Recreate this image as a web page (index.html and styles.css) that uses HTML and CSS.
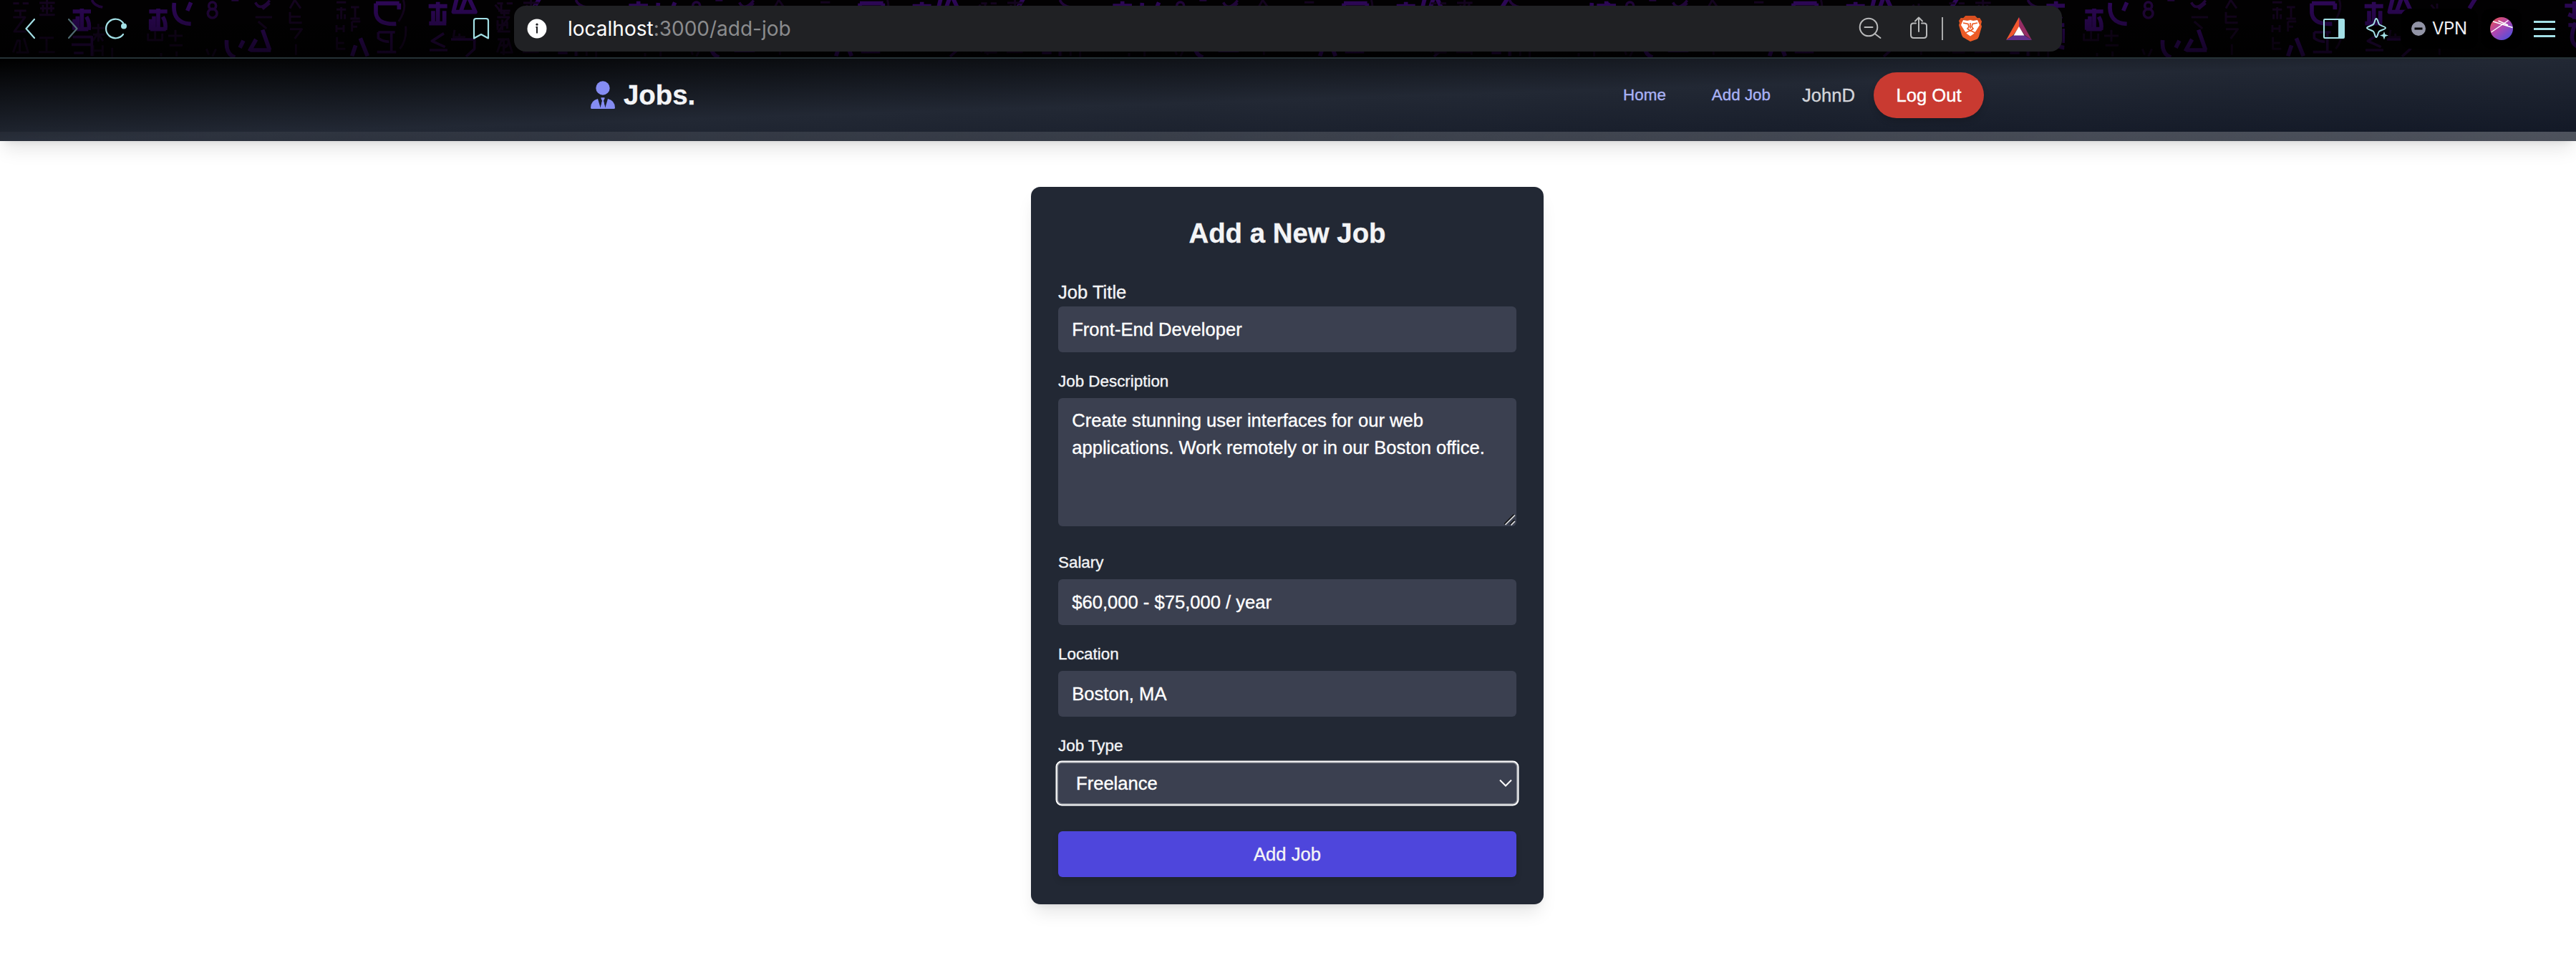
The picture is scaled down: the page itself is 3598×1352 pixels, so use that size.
FILE: index.html
```html
<!DOCTYPE html>
<html lang="en">
<head>
<meta charset="utf-8">
<title>Add a New Job</title>
<link rel="stylesheet" href="styles.css">
</head>
<body>
<div class="toolbar">
  <svg class="rain" width="3598" height="80" viewBox="0 0 3598 80" aria-hidden="true">
    <defs>
      <linearGradient id="rainFade" x1="0" y1="0" x2="0" y2="1">
        <stop offset="0" stop-color="#000" stop-opacity="0"/>
        <stop offset="1" stop-color="#000" stop-opacity=".6"/>
      </linearGradient>
      <g id="rainTile" transform="scale(.33333)" fill="none" stroke-linejoin="round">
        <g class="dim">
          <path d="M55 14h25M95 14h25M60 45h50M55 72h50l-45 60h50M85 45v22"/>
          <path d="M165 12h65M197 0v62M168 35h60M165 62h65M180 20v30M215 20v30"/>
          <path d="M55 220l18-50 10 0v50M100 160l18 60h-50M165 158h60M195 158v60M162 218h68"/>
          <path d="M385 118h55M412 100v75M390 145h48M390 170l20-30 22 32M390 190v45M430 190v45M390 212h40"/>
          <path d="M620 140v28h60v-28M650 132v34M705 150h60M735 125v50M710 190h55M675 222v15M740 215v22"/>
          <path d="M470 200v40M865 205l10 25M905 205l-15 32"/>
          <path d="M1070 72h70M1082 90l35 30M1215 35l20-35 25 35M1215 50v45h50M1215 70h45M1215 122h50l-30 40M1240 185v45"/>
          <path d="M1410 10h40M1410 40h40M1430 30v50M1415 60v20M1445 60v20M1410 105v30M1440 105v30M1410 120h30M1412 155v50h35M1412 180h30"/>
          <path d="M1470 30h35M1488 30v48M1468 78h40M1475 90h35M1475 90v42M1475 112h22M1690 0q15 40-20 90M1700 110q5 60-25 95"/>
          <path d="M2075 20l20 25M2100 15v40h35M2085 85v40M2105 82v45M2125 90v30M2080 105h50M2085 165h45q5 30-20 35v30M2090 190h35"/>
          <path d="M1905 125l-5 30h50M1925 140v30"/>
        </g>
        <circle cx="890" cy="24" r="15" class="mid"/>
        <circle cx="890" cy="56" r="19" class="mid"/>
        <g class="mid">
          <path d="M385 0q10 25 45 30M970 0l30 0M1070 10q20 40 60-8M1100 38l30-25"/>
          <path d="M305 155h80v80M300 187h80M310 222h40"/>
          <path d="M1860 140l-50 32 55 25M1800 210h75M1890 165h98v40l-35 32"/>
          <path d="M1585 135h70M1640 130v85M1585 135v25q20 15 45 15M1580 218h80"/>
        </g>
        <g class="lit">
          <path d="M305 48h76M343 36v86M325 68v55M320 122h50M362 70q15 25 10 55M312 80v45"/>
          <path d="M625 48h76M663 36v86M645 68v55M630 122h65M682 70q15 25 10 55M632 80v45"/>
          <path d="M730 12q-10 85 70 88M800 10l-15 35"/>
          <path d="M950 168q-5 60 35 72M1020 170l-15 30"/>
          <path d="M1045 215l28-50M1100 125l30 85M1050 210h85"/>
          <path d="M1575 14h98M1672 14v26M1575 14v40q5 50 85 46"/>
          <path d="M1796 26h78M1835 8v88M1815 46v52M1798 98h72M1862 46v50"/>
          <path d="M1920-30l-20 80h92l-35-75M1930 50l22-60"/>
          <path d="M1475 235l15-45M1510 160l30 75"/>
        </g>
        <g class="lit">
          <path d="M2260-5l-25 40M2635 24h80M2675 5v75M2650 60l50 20M2650 105h60M2680 95q-40 100 30 105M2710 120v60"/>
        </g>
      </g>
    </defs>
    <use href="#rainTile"/>
    <use href="#rainTile" x="676"/>
    <use href="#rainTile" x="1352"/>
    <use href="#rainTile" x="1980"/>
    <rect x="2884" width="714" height="80" fill="#020102"/>
    <use href="#rainTile" x="2704"/>
    <rect width="3598" height="80" fill="url(#rainFade)"/>
  </svg>

  <div class="controls">
    <svg width="14" height="80" viewBox="35 0 14 80" class="cyan"><path d="M48 27L36.500 40L48 53"/></svg>
    <svg width="14" height="80" viewBox="95 0 14 80" class="cyan faded"><path d="M96 27L107.500 40L96 53"/></svg>
    <svg width="32" height="80" viewBox="146 0 32 80" class="cyan"><path d="M172 48a13.300 13.300 0 1 1 0-16"/><circle cx="173" cy="36.500" r="4" class="cyan-fill"/></svg>
  </div>
  <svg width="24" height="80" viewBox="660 0 24 80" class="cyan bookmark"><path d="M662 29q0-3 3-3h14q3 0 3 3v24.500l-10-5.500l-10 5.500z"/></svg>

  <div class="address">
    <svg width="28" height="28" viewBox="0 0 28 28"><circle cx="14" cy="14" r="13.500" fill="#fff"/><circle cx="14" cy="8.200" r="1.600" fill="#202124"/><path d="M12.500 12H14v8.500" fill="none" stroke="#202124" stroke-width="2"/></svg>
    <span class="url"><span class="host">localhost</span><span class="path">:3000/add-job</span></span>
    <svg width="32" height="64" viewBox="2596 8 32 64" class="grey"><circle cx="2610" cy="38" r="12.300"/><path d="M2604.500 38h11M2618.500 47L2626.500 53"/></svg>
    <svg width="24" height="64" viewBox="2668 8 24 64" class="grey share"><path d="M2676 32.500h-3.500q-3.500 0-3.500 3.500v13q0 4 4 4h14q4 0 4-4v-13q0-3.500-3.500-3.500h-3.500M2680 44V25M2675 29.500l5-5l5 5"/></svg>
    <span class="divider"></span>
    <svg width="32" height="36" viewBox="0 0 32 36"><path d="M9.500 0h13l3.500 3.500l3-.5l3 5l-1 4l1 3l-4 14q-1 3-3.500 4L16 36l-8.500-5q-2.500-1-3.500-4L0 13l1-3L0 7l3-4l3 .5z" fill="#ed5b25"/><path d="M9.500 0h13l3.500 3.500l3-.5l3 5h-6L16 5L6 8H0l3-5l3 .5z" fill="#d94f20"/><path d="M6 6l6 1l4-1l4 1l6-1l3 7l-5 8l-3 4l-5 3.500l-5-3.500l-3-4l-5-8z" fill="#fff"/><path d="M6 10l7 1.500l1 4l-2 2.500l4 3l4-3l-2-2.500l1-4l7-1.500M16 10v8M9 24l7-3.500l7 3.500" fill="none" stroke="#ed5b25" stroke-width="1.700"/></svg>
    <svg class="bat" width="36" height="32" viewBox="0 0 36 32"><path d="M18 0v14L10 25L0 32z" fill="#f1562f"/><path d="M18 0l18 32l-10-7l-8-11z" fill="#962c64"/><path d="M0 32l11-7h14l11 7z" fill="#612f8c"/><path d="M18 13l7.500 12.500h-15z" fill="#fff"/></svg>
  </div>

  <div class="extras">
    <svg width="30" height="28" viewBox="0 0 30 28"><rect x="1" y="1" width="28" height="26" rx="1" fill="none" stroke="#a3e0e6" stroke-width="2"/><path d="M21 1h8v26h-8z" fill="#a3e0e6"/></svg>
    <svg class="spark" width="32" height="80" viewBox="3304 0 32 80"><path d="M3319 26c2 0 2.500 6 4 8s9 3 9 5-7 3-9 5-2 8-4 8-2-6-4-8-9-3-9-5 7-3 9-5 2-8 4-8z" fill="none" stroke="#a3e0e6" stroke-width="2"/><path d="M3330 44l1.500 4l4.500 1.500l-4.500 1.500l-1.500 4.500l-1.500-4.500l-4.500-1.500l4.500-1.500z" fill="#a3e0e6"/></svg>
    <span class="vpn"><svg width="20" height="20" viewBox="0 0 20 20"><circle cx="10" cy="10" r="10" fill="#9294a6"/><path d="M4.500 10h11" stroke="#000" stroke-width="3"/></svg>VPN</span>
    <span class="profile"><svg width="32" height="32" viewBox="0 0 32 32"><defs><linearGradient id="orb" x1=".1" y1="0" x2=".9" y2="1"><stop offset="0" stop-color="#e8544f"/><stop offset=".45" stop-color="#b045b0"/><stop offset="1" stop-color="#4450e0"/></linearGradient></defs><circle cx="16" cy="16" r="16" fill="url(#orb)"/><path d="M4 6l27.500 8.500M1.500 21L25.500 4.500M11.500 5L25 11" stroke="#fff" stroke-width="1.500" fill="none"/></svg></span>
    <span class="burger"></span>
  </div>
</div>

<header class="header">
  <div class="header-row">
    <a class="brand">
      <svg width="34" height="40" viewBox="0 0 34 40" fill="#858cf2"><circle cx="17" cy="10" r="9.700"/><path d="M10 25L13.700 37.500L16 28L14.300 24q0-.7.700-.7h4q.7 0 .7.700L18 28l2.300 9.500L24 25q10 2.500 10 12.500q0 1.500-1.700 1.500H1.700Q0 39 0 37.500Q0 27.500 10 25z"/><path d="M16 28h2l2.300 10h-6.600z"/></svg>
      <span>Jobs.</span>
    </a>
    <nav class="nav">
      <a class="link">Home</a>
      <a class="link">Add Job</a>
      <span class="user">JohnD</span>
      <button class="logout">Log Out</button>
    </nav>
  </div>
  <div class="header-edge"></div>
</header>

<main>
  <form class="card">
    <h1>Add a New Job</h1>
    <label class="label-large" for="title">Job Title</label>
    <input id="title" class="field" value="Front-End Developer">
    <label for="description">Job Description</label>
    <div class="area">
      <textarea id="description" class="field">Create stunning user interfaces for our web applications. Work remotely or in our Boston office.</textarea>
      <svg class="grip" width="16" height="16" viewBox="0 0 16 16" fill="none"><path d="M0 14L13.500 .5M8 14.500L14.500 8" stroke="#111" stroke-width="1.500"/><path d="M1.500 15L15 1.500M9.500 15.500L15 10" stroke="#ddd" stroke-width="1.700"/></svg>
    </div>
    <label for="salary">Salary</label>
    <input id="salary" class="field" value="$60,000 - $75,000 / year">
    <label for="location">Location</label>
    <input id="location" class="field" value="Boston, MA">
    <label class="label-tight" for="type">Job Type</label>
    <div class="select" id="type"><span>Freelance</span><svg width="18" height="12" viewBox="0 0 18 12"><path d="M1 1.500L9 9.500L17 1.500" fill="none" stroke="#fff" stroke-width="2"/></svg></div>
    <button class="submit">Add Job</button>
  </form>
</main>
</body>
</html>
```

FILE: styles.css
```css
* { box-sizing: border-box; }

body {
  margin: 0;
  height: 1352px;
  overflow: hidden;
  background: #fff;
  font-family: "Liberation Sans", Arial, sans-serif;
  font-size: 25.6px;
  line-height: 38.4px;
  -webkit-text-stroke: .35px currentColor;
}

svg { display: block; flex: none; }

button, input, textarea { font: inherit; border: 0; margin: 0; }

/* Browser toolbar */
.toolbar {
  position: relative;
  display: flex;
  align-items: center;
  height: 82px;
  background: #020102;
  border-bottom: 2px solid #263236;
  -webkit-text-stroke: 0;
}

.rain { position: absolute; left: 0; top: 0; }
.rain .dim { stroke: #14041f; stroke-width: 9; }
.rain .mid { stroke: #21053a; stroke-width: 11; }
.rain .lit { stroke: #2d0757; stroke-width: 17; }

.controls, .bookmark, .address, .extras { position: relative; }
.controls { display: flex; padding-left: 35px; }
.controls svg:nth-child(2) { margin-left: 46px; }
.controls svg:nth-child(3) { margin-left: 37px; }

.cyan {
  fill: none;
  stroke: #a3e0e6;
  stroke-width: 2.2;
  stroke-linecap: round;
  stroke-linejoin: round;
}
.cyan-fill { fill: #a3e0e6; stroke: none; }
.faded { stroke: #4f6a70; }
.bookmark { margin-left: 482px; }

.address {
  display: flex;
  align-items: center;
  width: 2162px;
  height: 64px;
  margin-left: 34px;
  padding: 0 42px 0 18px;
  border-radius: 16px;
  background: #202124;
}
.url {
  flex: 1;
  margin-left: 29px;
  font-family: Inter, sans-serif;
  font-size: 28px;
  color: #8b8c8e;
}
.host { color: #fff; }
.grey {
  fill: none;
  stroke: #b9babb;
  stroke-width: 2;
  stroke-linecap: round;
  stroke-linejoin: round;
}
.share { margin: 0 20px 0 40px; }
.divider { width: 2px; height: 32px; margin-right: 22px; background: #a9aaab; }
.bat { margin-left: 34px; }

.extras { display: flex; align-items: center; margin-left: 365px; }
.spark { margin: 0 17px 0 29px; }
.vpn {
  display: flex;
  align-items: center;
  gap: 9px;
  width: 108px;
  height: 56px;
  padding-left: 15px;
  border-radius: 14px;
  background: #000;
  color: #f0f0f4;
  font-family: Inter, sans-serif;
  font-size: 24px;
  letter-spacing: -.5px;
}
.profile {
  display: flex;
  align-items: center;
  justify-content: center;
  width: 56px;
  height: 56px;
  margin: 0 17px 0 5px;
  border-radius: 14px;
  background: #000;
}
.burger {
  width: 30px;
  height: 23px;
  background: linear-gradient(#a3e0e6 3px, transparent 3px 10px, #a3e0e6 10px 13px, transparent 13px 20px, #a3e0e6 20px);
}

/* Site header */
.header {
  display: flex;
  flex-direction: column;
  height: 115px;
  background: linear-gradient(to bottom right, #000, #222834, #111725);
  box-shadow: 0 16px 24px -5px rgba(0, 0, 0, .1), 0 6px 10px -6px rgba(0, 0, 0, .1);
}
.header-row {
  display: flex;
  flex: 1;
  align-items: center;
  justify-content: space-between;
  padding: 0 827px 0 825px;
}
.header-edge {
  height: 13px;
  background: linear-gradient(to right, rgba(255, 255, 255, .03), rgba(255, 255, 255, .25));
}
.brand {
  display: flex;
  align-items: center;
  gap: 12px;
  font-size: 38.4px;
  font-weight: 700;
  color: #f3f4f6;
}
.nav { display: flex; align-items: center; }
.link { font-size: 22.4px; color: #a9b2f5; }
.link + .link { margin-left: 64px; }
.user { margin-left: 44px; color: #d3d5da; }
.logout {
  width: 154px;
  height: 64px;
  margin-left: 26px;
  padding: 0;
  border-radius: 32px;
  background: #c93a31;
  color: #fff;
  box-shadow: 0 5px 9px rgba(0, 0, 0, .15);
}

/* Job form */
main { display: flex; justify-content: center; padding: 64px 2px 0 0; }
.card {
  display: flex;
  flex-direction: column;
  width: 716px;
  height: 1002px;
  padding: 39px 38px 38px;
  border-radius: 13px;
  background: #222834;
  color: #f3f4f6;
  box-shadow: 0 16px 24px -5px rgba(0, 0, 0, .1), 0 6px 10px -6px rgba(0, 0, 0, .1);
}
h1 {
  margin: 0 0 38px;
  font-size: 38.4px;
  line-height: 51px;
  text-align: center;
}
label { margin: 25px 0 7px; font-size: 22.4px; line-height: 32px; }
.label-large { margin: 0; font-size: 25.6px; line-height: 39px; }
.label-tight { margin-bottom: 0; }
.field {
  display: block;
  width: 640px;
  height: 64px;
  padding: 0 19.2px;
  border-radius: 6px;
  outline: 0;
  background: #3b4050;
  color: #fff;
}
.area { position: relative; height: 179px; margin-bottom: 10px; }
textarea.field { height: 179px; padding-top: 12px; resize: none; }
.grip { position: absolute; right: 1px; bottom: 1px; }
.select {
  display: flex;
  align-items: center;
  justify-content: space-between;
  height: 56px;
  margin: 8px 0 39px;
  padding: 0 6px 0 25px;
  border-radius: 5px;
  background: #3b4050;
  color: #fff;
  box-shadow: 0 0 0 1.500px #888b94, 0 0 0 3.500px #fff;
}
.submit {
  height: 64px;
  padding: 0;
  border-radius: 6px;
  background: #4e46dc;
  color: #f3f4f6;
  box-shadow: 0 5px 9px rgba(0, 0, 0, .12);
}
```
